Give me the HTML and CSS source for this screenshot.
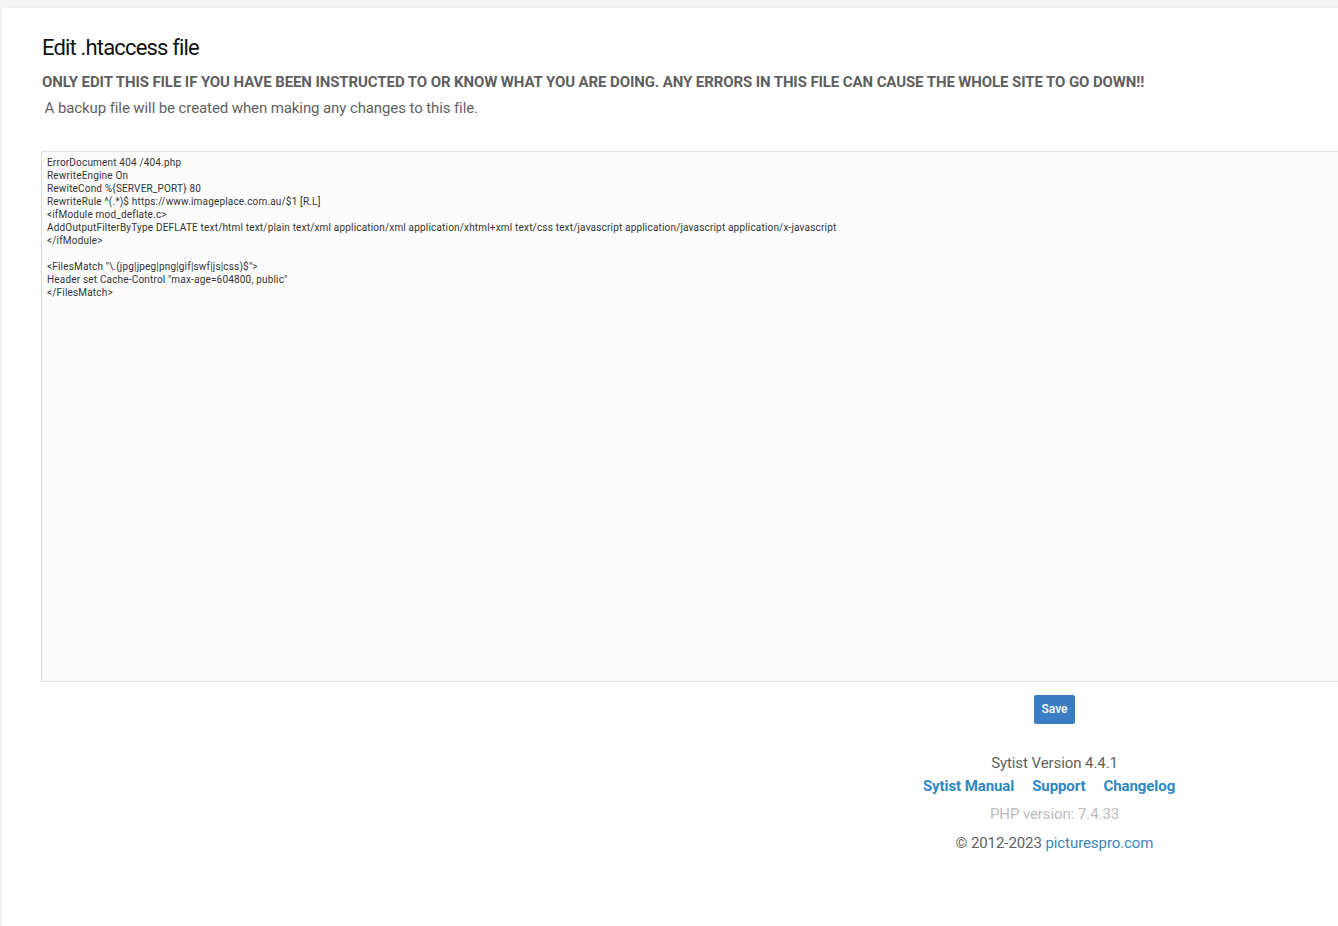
FILE: index.html
```html
<!DOCTYPE html>
<html lang="en">
<head>
<meta charset="utf-8">
<title>Edit .htaccess file</title>
<link rel="stylesheet" href="styles.css">
</head>
<body>
<main class="page">
  <h1 class="title">Edit .htaccess file</h1>
  <p class="warning">ONLY EDIT THIS FILE IF YOU HAVE BEEN INSTRUCTED TO OR KNOW WHAT YOU ARE DOING. ANY ERRORS IN THIS FILE CAN CAUSE THE WHOLE SITE TO GO DOWN!!</p>
  <p class="note">&nbsp;A backup file will be created when making any changes to this file.</p>
  <form class="editor">
    <textarea class="code" spellcheck="false">ErrorDocument 404 /404.php
RewriteEngine On
RewiteCond %{SERVER_PORT} 80
RewriteRule ^(.*)$ https://www.imageplace.com.au/$1 [R.L]
&lt;ifModule mod_deflate.c&gt;
AddOutputFilterByType DEFLATE text/html text/plain text/xml application/xml application/xhtml+xml text/css text/javascript application/javascript application/x-javascript
&lt;/ifModule&gt;

&lt;FilesMatch "\.(jpg|jpeg|png|gif|swf|js|css)$"&gt;
Header set Cache-Control "max-age=604800, public"
&lt;/FilesMatch&gt;</textarea>
    <button class="save" type="button">Save</button>
  </form>
  <footer class="footer">
    <div class="version">Sytist Version 4.4.1</div>
    <nav class="links">
      <a href="#">Sytist Manual</a>
      <a href="#">Support</a>
      <a href="#">Changelog</a>
    </nav>
    <div class="php">PHP version: 7.4.33</div>
    <div class="copy">© 2012-2023 <a href="#">picturespro.com</a></div>
  </footer>
</main>
</body>
</html>
```

FILE: styles.css
```css
html, body {
  margin: 0;
  height: 100%;
  overflow: hidden;
  background: #f4f4f4;
}
body {
  font-family: Roboto, "Liberation Sans", sans-serif;
  color: #5f5f5f;
  padding: 8px 0 0 2px;
  box-sizing: border-box;
}
.page {
  width: 2105px;
  height: 918px;
  box-sizing: border-box;
  padding: 24px 0 0 39px;
  background: #fff;
  box-shadow: 0 0 1px rgba(0, 0, 0, 0.12);
}
.title {
  margin: 0;
  padding-left: 1px;
  font-size: 22px;
  line-height: 32px;
  font-weight: 400;
  letter-spacing: -0.83px;
  color: #111;
}
.warning {
  margin: 8px 0 0;
  padding-left: 1px;
  font-size: 15px;
  line-height: 20px;
  font-weight: 700;
  letter-spacing: -0.1px;
  white-space: nowrap;
}
.note {
  margin: 6px 0 0;
  font-size: 15px;
  line-height: 20px;
  letter-spacing: -0.1px;
}
.editor {
  width: 2027px;
  margin-top: 33px;
  display: flex;
  flex-direction: column;
  align-items: center;
}
.code {
  display: block;
  width: 100%;
  height: 531px;
  box-sizing: border-box;
  margin: 0;
  padding: 4px 5px;
  border: 1px solid #dedede;
  background: #fcfcfc;
  color: #333;
  font-family: Roboto, "Liberation Sans", sans-serif;
  font-size: 10px;
  line-height: 13px;
  letter-spacing: 0.18px;
  resize: none;
  outline: 0;
}
.save {
  margin-top: 13px;
  width: 41px;
  height: 29px;
  padding: 0 0 2px;
  border: 0;
  border-radius: 2px;
  background: #3a7dc4;
  color: #fff;
  font-family: inherit;
  font-size: 12px;
  font-weight: 500;
}
.footer {
  width: 2027px;
  margin-top: 29px;
  text-align: center;
  font-size: 15px;
  letter-spacing: -0.08px;
}
.version {
  line-height: 20px;
}
.links {
  display: flex;
  justify-content: center;
  gap: 18px;
  margin-top: 3px;
  padding-right: 11px;
  line-height: 20px;
  font-weight: 700;
}
.links a {
  color: #2e88c4;
  text-decoration: none;
}
.php {
  margin-top: 8px;
  line-height: 20px;
  color: #bbb;
}
.copy {
  margin-top: 9px;
  line-height: 20px;
}
.copy a {
  color: #3a87bd;
  text-decoration: none;
}
```
